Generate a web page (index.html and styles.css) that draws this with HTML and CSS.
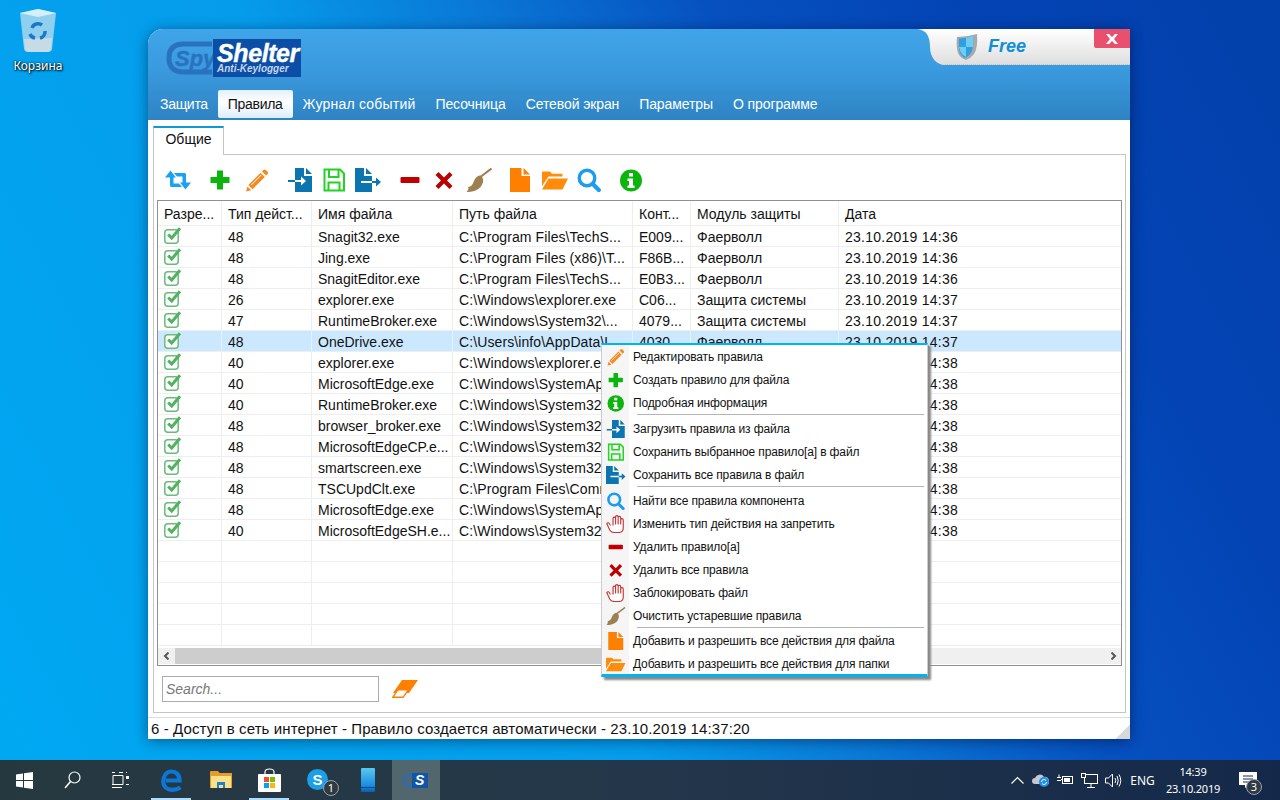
FILE: index.html
```html
<!DOCTYPE html>
<html lang="ru">
<head>
<meta charset="utf-8">
<title>SpyShelter</title>
<link rel="stylesheet" href="styles.css">
</head>
<body>
<svg class="defs" xmlns="http://www.w3.org/2000/svg">
  <symbol id="i-retweet" viewBox="0 0 26 24"><g transform="translate(0 2.5)" fill="#1ba1f2"><path d="M5.5 0L11 7H8.5V13H14L17 16.5H6.5Q5 16.5 5 15V7H0z"/><path d="M20.5 19L15 12H17.5V6H12L9 2.5H19.5Q21 2.5 21 4V12H26z"/></g></symbol>
  <symbol id="i-plus" viewBox="0 0 26 24"><path fill="#0cb50c" d="M10 2.5h6v6.5h6.5v6H16v6.5h-6V15H3.5V9H10z"/></symbol>
  <symbol id="i-pencil" viewBox="0 0 26 24"><g fill="#f58a1f"><path d="M8.6 21.2L4.4 17 16.6 4.8l4.2 4.2z"/><path d="M3.4 18.4l3.8 3.8-5.2 1.2z"/><path d="M18 3.4l1.4-1.4q1.2-1.2 2.4 0l1.8 1.8q1.2 1.2 0 2.4l-1.4 1.4z"/></g><path d="M7.2 17L17.4 6.8" stroke="#fff" stroke-width="1"/></symbol>
  <symbol id="i-import" viewBox="0 0 26 24"><g fill="#0b75b0"><path d="M8 0h9v8h8v16H8z"/><path d="M19 0l6 6h-6z"/><rect x="1" y="12" width="7" height="2"/></g><path fill="#fff" d="M8 12h6V8.5l5 4.5-5 4.5V14H8z"/></symbol>
  <symbol id="i-save" viewBox="0 0 26 24"><g fill="none" stroke="#22d422" stroke-width="2"><path d="M3.5 1.5h15.5l4 4v17H3.5z"/><path d="M8 1.5v7.500h9.500v-7.500"/><path d="M7.500 22.500v-8h11v8"/></g></symbol>
  <symbol id="i-export" viewBox="0 0 26 24"><g fill="#0b75b0"><path d="M0 0h9v8h8v16H0z"/><path d="M11 0l6 6h-6z"/><path d="M17 13h4V9.500l5 4.500-5 4.500V15h-4z"/></g><rect x="6" y="13" width="11" height="2" fill="#fff"/></symbol>
  <symbol id="i-minus" viewBox="0 0 26 24"><rect x="3.500" y="9" width="19" height="6" rx="1" fill="#c00000"/></symbol>
  <symbol id="i-times" viewBox="0 0 26 24"><path fill="#bb0000" d="M4.500 7L7.500 4l5.500 5.500L18.500 4l3 3-5.500 5.500 5.500 5.500-3 3-5.500-5.500L7.500 21l-3-3 5.500-5.500z"/></symbol>
  <symbol id="i-broom" viewBox="0 0 26 24"><path d="M25.500 .5L15 8.500" stroke="#9e7f50" stroke-width="2" fill="none"/><path fill="#9e7f50" d="M14.500 7.500C18 10 18 14 15 18.500 11.500 23 5 24 .5 24 2.500 22 3 20.500 2 19 5 19 7 16 8 13 9 10 11.500 7.500 14.500 7.500z"/></symbol>
  <symbol id="i-file" viewBox="0 0 26 24"><g fill="#ff7f00"><path d="M3 0h11.500v8H23v16H3z"/><path d="M16.500 0l6.500 6.500h-6.500z"/></g></symbol>
  <symbol id="i-folder" viewBox="0 0 26 24"><g fill="#ff8c0a" transform="translate(0 2.500)"><path d="M0 16V2Q0 1 1 1H8l2 2.200h9.500q1 0 1 1V6H6.500L1 14z"/><path d="M6.500 8H26L20.500 19H0z"/></g></symbol>
  <symbol id="i-search" viewBox="0 0 26 24"><g fill="none" stroke="#1a9cf0"><circle cx="11" cy="10" r="7.800" stroke-width="3.400"/><path d="M16.800 16l6 6" stroke-width="4.200" stroke-linecap="round"/></g></symbol>
  <symbol id="i-info" viewBox="0 0 26 24"><circle cx="13" cy="12.500" r="11" fill="#0bb50b"/><rect x="11" y="5" width="4" height="3.500" fill="#fff"/><path fill="#fff" d="M9.500 10.500H15v7h1.500V20h-7v-2.500H11v-4.500H9.500z"/></symbol>
  <symbol id="i-hand" viewBox="0 0 26 24"><path fill="#fff" stroke="#c83232" stroke-width="1.500" stroke-linejoin="round" d="M6 14L4 11a1.500 1.500 0 0 0-2.400 1.800L5 20q2 3.300 6 3.300h6q6 0 6-6V6.500a1.700 1.700 0 0 0-3.400 0V12V3.500a1.700 1.700 0 0 0-3.400 0V12V2.500a1.700 1.700 0 0 0-3.400 0V12V4.500a1.700 1.700 0 0 0-3.400 0V14"/></symbol>
  <symbol id="i-check" viewBox="0 0 18 17"><rect x=".8" y="2.800" width="13.400" height="13.400" rx="3" fill="#fff" stroke="#6abb7c" stroke-width="1.500"/><path d="M4.200 7.500l3.500 3.500 8.300-9.700" fill="none" stroke="#4fb35f" stroke-width="3"/></symbol>
</svg>

<main class="desktop">
  <div class="bin">
    <svg class="bin-icon" width="40" height="44" viewBox="0 0 40 44"><path d="M2 4L20 0l18 4-4 36q-.5 3-4 3H10q-3.500 0-4-3z" fill="#a8d8ee" opacity=".85"/><path d="M2 4L20 8l18-4-18-4z" fill="#d5effa"/><path d="M6 30l28-1-1 11q-.5 3-4 3H11q-3.500 0-4-3z" fill="#c7dbe6"/><g fill="none" stroke="#1f75c8" stroke-width="3.500"><path d="M14 19a6.500 6.500 0 0 1 10-3"/><path d="M27 22a6.500 6.500 0 0 1-5 7"/><path d="M17 29a6.500 6.500 0 0 1-5-4"/></g></svg>
    <span class="bin-label">Корзина</span>
  </div>

  <section class="window">
    <header class="win-head">
      <div class="logo">
        <svg width="136" height="38" viewBox="0 0 136 38">
          <path d="M46 5H18Q3 5 3 19t15 14H46" fill="none" stroke="#2a72c0" stroke-width="5"/>
          <text class="logo-spy" x="9" y="27">Spy</text>
          <rect x="47" y="0" width="88" height="38" fill="#0c4ea6"/>
          <text class="logo-sh" x="51" y="23">Shelter</text>
          <text class="logo-ak" x="51" y="33">Anti-Keylogger</text>
        </svg>
      </div>
      <nav class="nav">
        <a class="nav-item tight">Защита</a>
        <a class="nav-item tight active">Правила</a>
        <a class="nav-item wide">Журнал событий</a>
        <a class="nav-item">Песочница</a>
        <a class="nav-item">Сетевой экран</a>
        <a class="nav-item">Параметры</a>
        <a class="nav-item">О программе</a>
      </nav>
      <div class="free">
        <svg class="free-bg" width="215" height="36" viewBox="0 0 215 36"><defs><linearGradient id="fg" x1="0" y1="0" x2="0" y2="1"><stop offset="0" stop-color="#fff"/><stop offset="1" stop-color="#dedede"/></linearGradient></defs><path d="M0 0C12 0 15 8 15 18 15 29 22 36 30 36H215V0z" fill="url(#fg)"/><path d="M30 35.500H215" stroke="#c4c4c4" stroke-dasharray="1 1"/></svg>
        <svg class="shield" width="22" height="26" viewBox="0 0 22 26"><path d="M1 3Q11 3 21 0q1 14-3 20-3 4-8 6Q4 24 2 19 0 13 1 3z" fill="#a9a9a9"/><path d="M3 4.500Q10 4.500 17 2q1 12-2 17-2 3-6 5-4-2-5.500-6Q2.500 13 3 4.500z" fill="#2f9fe0"/><path d="M10 4v9h7q.500-4 0-11zM3 13h7v10q-4-2-5.500-5z" fill="#6ecdf5"/></svg>
        <span class="free-text">Free</span>
      </div>
      <button class="close" type="button"><svg width="14" height="10" viewBox="0 0 14 10"><path d="M1 0h3l3 3 3-3h3L9 5l4 5h-3L7 7l-3 3H1l4-5z" fill="#fff"/></svg></button>
    </header>

    <div class="win-main">
      <div class="tabs"><span class="tab">Общие</span></div>
      <div class="pane">
        <div class="toolbar">
          <svg class="tool g41"><use href="#i-retweet"/></svg>
          <svg class="tool g37"><use href="#i-plus"/></svg>
          <svg class="tool g43"><use href="#i-pencil"/></svg>
          <svg class="tool g33"><use href="#i-import"/></svg>
          <svg class="tool g34"><use href="#i-save"/></svg>
          <svg class="tool g41"><use href="#i-export"/></svg>
          <svg class="tool g34"><use href="#i-minus"/></svg>
          <svg class="tool g34"><use href="#i-times"/></svg>
          <svg class="tool g41"><use href="#i-broom"/></svg>
          <svg class="tool g34"><use href="#i-file"/></svg>
          <svg class="tool g34"><use href="#i-folder"/></svg>
          <svg class="tool g41"><use href="#i-search"/></svg>
          <svg class="tool"><use href="#i-info"/></svg>
        </div>

        <div class="grid-wrap">
          <table class="grid">
            <colgroup><col class="c1"><col class="c2"><col class="c3"><col class="c4"><col class="c5"><col class="c6"><col></colgroup>
            <thead><tr><th>Разре...</th><th>Тип дейст...</th><th>Имя файла</th><th>Путь файла</th><th>Конт...</th><th>Модуль защиты</th><th>Дата</th></tr></thead>
            <tbody>
              <tr><td><svg class="chk"><use href="#i-check"/></svg></td><td>48</td><td>Snagit32.exe</td><td>C:\Program Files\TechS...</td><td>E009...</td><td>Фаерволл</td><td>23.10.2019 14:36</td></tr>
              <tr><td><svg class="chk"><use href="#i-check"/></svg></td><td>48</td><td>Jing.exe</td><td>C:\Program Files (x86)\T...</td><td>F86B...</td><td>Фаерволл</td><td>23.10.2019 14:36</td></tr>
              <tr><td><svg class="chk"><use href="#i-check"/></svg></td><td>48</td><td>SnagitEditor.exe</td><td>C:\Program Files\TechS...</td><td>E0B3...</td><td>Фаерволл</td><td>23.10.2019 14:36</td></tr>
              <tr><td><svg class="chk"><use href="#i-check"/></svg></td><td>26</td><td>explorer.exe</td><td>C:\Windows\explorer.exe</td><td>C06...</td><td>Защита системы</td><td>23.10.2019 14:37</td></tr>
              <tr><td><svg class="chk"><use href="#i-check"/></svg></td><td>47</td><td>RuntimeBroker.exe</td><td>C:\Windows\System32\...</td><td>4079...</td><td>Защита системы</td><td>23.10.2019 14:37</td></tr>
              <tr class="sel"><td><svg class="chk"><use href="#i-check"/></svg></td><td>48</td><td>OneDrive.exe</td><td>C:\Users\info\AppData\L...</td><td>4030...</td><td>Фаерволл</td><td>23.10.2019 14:37</td></tr>
              <tr><td><svg class="chk"><use href="#i-check"/></svg></td><td>40</td><td>explorer.exe</td><td>C:\Windows\explorer.exe</td><td>C06...</td><td>Фаерволл</td><td>23.10.2019 14:38</td></tr>
              <tr><td><svg class="chk"><use href="#i-check"/></svg></td><td>40</td><td>MicrosoftEdge.exe</td><td>C:\Windows\SystemApps...</td><td>E1F0...</td><td>Фаерволл</td><td>23.10.2019 14:38</td></tr>
              <tr><td><svg class="chk"><use href="#i-check"/></svg></td><td>40</td><td>RuntimeBroker.exe</td><td>C:\Windows\System32\...</td><td>4079...</td><td>Фаерволл</td><td>23.10.2019 14:38</td></tr>
              <tr><td><svg class="chk"><use href="#i-check"/></svg></td><td>48</td><td>browser_broker.exe</td><td>C:\Windows\System32\...</td><td>A2C1...</td><td>Фаерволл</td><td>23.10.2019 14:38</td></tr>
              <tr><td><svg class="chk"><use href="#i-check"/></svg></td><td>48</td><td>MicrosoftEdgeCP.e...</td><td>C:\Windows\System32\...</td><td>B7D2...</td><td>Фаерволл</td><td>23.10.2019 14:38</td></tr>
              <tr><td><svg class="chk"><use href="#i-check"/></svg></td><td>48</td><td>smartscreen.exe</td><td>C:\Windows\System32\...</td><td>D4E8...</td><td>Фаерволл</td><td>23.10.2019 14:38</td></tr>
              <tr><td><svg class="chk"><use href="#i-check"/></svg></td><td>48</td><td>TSCUpdClt.exe</td><td>C:\Program Files\Comm...</td><td>9A3F...</td><td>Фаерволл</td><td>23.10.2019 14:38</td></tr>
              <tr><td><svg class="chk"><use href="#i-check"/></svg></td><td>48</td><td>MicrosoftEdge.exe</td><td>C:\Windows\SystemApps...</td><td>E1F0...</td><td>Фаерволл</td><td>23.10.2019 14:38</td></tr>
              <tr><td><svg class="chk"><use href="#i-check"/></svg></td><td>40</td><td>MicrosoftEdgeSH.e...</td><td>C:\Windows\System32\...</td><td>C3B6...</td><td>Фаерволл</td><td>23.10.2019 14:38</td></tr>
              <tr><td></td><td></td><td></td><td></td><td></td><td></td><td></td></tr>
              <tr><td></td><td></td><td></td><td></td><td></td><td></td><td></td></tr>
              <tr><td></td><td></td><td></td><td></td><td></td><td></td><td></td></tr>
              <tr><td></td><td></td><td></td><td></td><td></td><td></td><td></td></tr>
              <tr><td></td><td></td><td></td><td></td><td></td><td></td><td></td></tr>
            </tbody>
          </table>
          <div class="hscroll">
            <span class="arrow"><svg width="8" height="8" viewBox="0 0 8 8"><path d="M5.500 .5L2 4l3.500 3.500" fill="none" stroke="#555" stroke-width="2"/></svg></span>
            <span class="thumb"></span>
            <span class="arrow"><svg width="8" height="8" viewBox="0 0 8 8"><path d="M2.500 .5L6 4 2.500 7.500" fill="none" stroke="#555" stroke-width="2"/></svg></span>
          </div>
        </div>

        <div class="search-row">
          <div class="search">Search...</div>
          <svg class="eraser" width="26" height="18" viewBox="0 0 26 18"><path d="M10 0H26L17 13H1z" fill="#ff8000"/><path d="M.7 17.300L6 9.700h10.500l-5.500 7.600z" fill="#fff" stroke="#ff8000" stroke-width="1.400"/></svg>
        </div>
      </div>
    </div>

    <footer class="status">6 - Доступ в сеть интернет - Правило создается автоматически - 23.10.2019 14:37:20</footer>
    <span class="grip"></span>
  </section>

  <div class="menu">
    <div class="mi"><svg class="mic"><use href="#i-pencil"/></svg><span>Редактировать правила</span></div>
    <div class="mi"><svg class="mic"><use href="#i-plus"/></svg><span>Создать правило для файла</span></div>
    <div class="mi"><svg class="mic"><use href="#i-info"/></svg><span>Подробная информация</span></div>
    <div class="msep"></div>
    <div class="mi"><svg class="mic"><use href="#i-import"/></svg><span>Загрузить правила из файла</span></div>
    <div class="mi"><svg class="mic"><use href="#i-save"/></svg><span>Сохранить выбранное правило[а] в файл</span></div>
    <div class="mi"><svg class="mic"><use href="#i-export"/></svg><span>Сохранить все правила в файл</span></div>
    <div class="msep"></div>
    <div class="mi"><svg class="mic"><use href="#i-search"/></svg><span>Найти все правила компонента</span></div>
    <div class="mi"><svg class="mic"><use href="#i-hand"/></svg><span>Изменить тип действия на запретить</span></div>
    <div class="mi"><svg class="mic"><use href="#i-minus"/></svg><span>Удалить правило[а]</span></div>
    <div class="mi"><svg class="mic"><use href="#i-times"/></svg><span>Удалить все правила</span></div>
    <div class="mi"><svg class="mic"><use href="#i-hand"/></svg><span>Заблокировать файл</span></div>
    <div class="mi"><svg class="mic"><use href="#i-broom"/></svg><span>Очистить устаревшие правила</span></div>
    <div class="msep thin"></div>
    <div class="mi"><svg class="mic"><use href="#i-file"/></svg><span>Добавить и разрешить все действия для файла</span></div>
    <div class="mi"><svg class="mic"><use href="#i-folder"/></svg><span>Добавить и разрешить все действия для папки</span></div>
  </div>
</main>

<footer class="taskbar">
  <div class="tb-btn"><svg width="17" height="17" viewBox="0 0 17 17"><path fill="#fff" d="M0 2.400L7 1.400V8H0zM8 1.300L17 0V8H8zM0 9h7v6.600l-7-1zM8 9h9v8l-9-1.300z"/></svg></div>
  <div class="tb-btn"><svg width="17" height="18" viewBox="0 0 17 18"><circle cx="10.500" cy="6.500" r="5.500" fill="none" stroke="#fff" stroke-width="1.200"/><path d="M6.500 10.500L1 17" stroke="#fff" stroke-width="1.500"/></svg></div>
  <div class="tb-btn tb-gap"><svg width="17" height="16" viewBox="0 0 17 16"><g fill="none" stroke="#fff"><path d="M0 .5h3M0 15.500h10M0 12.500h11V3.500H1v9M7 .5h4"/></g><rect x="14" y="4" width="3" height="3" fill="#fff"/><rect x="14" y="12" width="3" height="1" fill="#fff"/><rect x="14" y="0" width="1" height="1" fill="#fff"/></svg></div>
  <div class="app on"><svg width="21" height="23" viewBox="0 0 21 23"><path fill="none" stroke="#0a78d8" stroke-width="4.200" d="M5 11.500H18.500C18.500 5.500 15 2.500 10.500 2.500 5 2.500 2.300 7.500 2.300 12.500 2.300 18.500 7 20.800 11 20.800 14 20.800 17 20 19.500 18.500"/></svg></div>
  <div class="app"><svg width="22" height="18" viewBox="0 0 22 18"><path fill="#e89b2a" d="M0 1q0-1 1-1h7l1.500 2H22v15H0z"/><path fill="#fbe08a" d="M1 5h20v12H1z"/><path fill="#1c7fd0" d="M7 11h8v6h-2v-3H9v3H7z"/></svg></div>
  <div class="app on"><svg width="23" height="24" viewBox="0 0 23 24"><path fill="none" stroke="#fff" stroke-width="1.200" d="M7 7V4q0-3 4.500-3T16 4v3"/><rect y="6" width="23" height="18" rx="1" fill="#fff"/><rect x="6" y="9" width="5" height="5" fill="#f25022"/><rect x="12" y="9" width="5" height="5" fill="#7fba00"/><rect x="6" y="15" width="5" height="5" fill="#00a4ef"/><rect x="12" y="15" width="5" height="5" fill="#ffb900"/></svg></div>
  <div class="app app-sky"><span class="sky">S</span><span class="badge sky-badge">1</span></div>
  <div class="app"><svg width="14" height="24" viewBox="0 0 14 24"><defs><linearGradient id="ph" x1="0" y1="0" x2="0" y2="1"><stop offset="0" stop-color="#5ac8f0"/><stop offset=".7" stop-color="#1f8fe0"/><stop offset="1" stop-color="#0a5fb0"/></linearGradient></defs><rect width="14" height="24" rx="1" fill="url(#ph)"/><rect y="19" width="14" height="1" fill="#0a4a90"/></svg></div>
  <div class="app active"><svg width="26" height="15" viewBox="0 0 26 15"><path d="M9 2H6Q1 2 1 7.500T6 13H9" fill="none" stroke="#1f6fc4" stroke-width="2"/><rect x="9" width="16" height="15" fill="#1254a8"/><text class="tb-s" x="12" y="12">S</text></svg></div>

  <div class="tray">
    <div class="t-ic"><svg width="13" height="8" viewBox="0 0 13 8"><path d="M.5 7.500l6-6 6 6" fill="none" stroke="#fff" stroke-width="1.200"/></svg></div>
    <div class="t-ic"><svg width="18" height="14" viewBox="0 0 18 14"><path d="M3 11a3 3 0 0 1 0-6 5 5 0 0 1 9-1 4 4 0 0 1 5 4v3z" fill="#c5c9cf"/><circle cx="12" cy="9" r="5" fill="#1f8fe8"/><path d="M9.500 9a2.500 2.500 0 0 1 4.500-1.500M14.500 9a2.500 2.500 0 0 1-4.500 1.500" fill="none" stroke="#fff"/></svg></div>
    <div class="t-ic"><svg width="16" height="12" viewBox="0 0 16 12"><g fill="none" stroke="#fff"><rect x="5.500" y="2.500" width="10" height="7"/><path d="M0 3.500h4M0 6.500h4M2 3.500v-3M5 5.500H4"/></g><rect x="7" y="4" width="6" height="4" fill="#fff"/></svg></div>
    <div class="t-ic"><svg width="17" height="15" viewBox="0 0 17 15"><g fill="none" stroke="#fff"><rect x="3.500" y="1.500" width="13" height="9"/><rect x=".5" y=".5" width="4" height="4" fill="#1a2e46"/><path d="M10 10.500v4M6 14.500h8"/></g></svg></div>
    <div class="t-ic"><svg width="17" height="15" viewBox="0 0 17 15"><g fill="none" stroke="#fff"><path d="M.5 5h3L7.500 1v13l-4-4h-3z"/><path d="M10 5q1.500 2.500 0 5M12 3q2.500 4.500 0 9M14 1.500q3.500 6 0 12"/></g></svg></div>
    <div class="t-eng">ENG</div>
    <div class="t-clock"><span>14:39</span><span>23.10.2019</span></div>
    <div class="t-note"><svg width="18" height="16" viewBox="0 0 18 16"><path fill="#fff" d="M0 0h18v13h-8l-4 3v-3H0z"/><path d="M4 4h10M4 7h10M4 10h7" stroke="#1a2e46"/></svg><span class="badge note-badge">3</span></div>
    <div class="t-end"></div>
  </div>
</footer>
</body>
</html>
```
FILE: styles.css
```css
* { box-sizing: border-box; }
html, body { margin: 0; height: 100%; }
body {
  width: 1280px; height: 800px; overflow: hidden;
  display: flex; flex-direction: column;
  font-family: "Liberation Sans", "Noto Sans", sans-serif;
  font-size: 14px; color: #111;
}
.defs { display: none; }
.desktop {
  flex: 1; position: relative;
  background: linear-gradient(62deg, #00a8f2 0%, #059ceb 38%, #0a78d6 52%, #0650c0 66%, #0343b4 82%, #0240aa 100%);
}

/* desktop icon */
.bin { position: absolute; left: 8px; top: 9px; width: 60px; display: flex; flex-direction: column; align-items: center; }
.bin-icon { display: block; }
.bin-label { font-family: "Noto Sans", sans-serif; color: #fff; font-size: 12px; line-height: 16px; margin-top: 5px; text-shadow: 0 0 2px #000, 1px 1px 2px #000; }

/* window */
.window {
  position: absolute; left: 148px; top: 29px; width: 982px; height: 710px;
  display: flex; flex-direction: column; background: #fff;
  border-top-left-radius: 15px;
  box-shadow: 0 2px 14px rgba(0,0,30,.45);
}
.win-head {
  position: relative; height: 91px; flex: none;
  background: linear-gradient(180deg, #3fa5e8 0%, #3a9ade 45%, #2e83c3 100%);
  border-top-left-radius: 15px;
  display: flex; flex-direction: column;
}
.logo { height: 61px; padding: 10px 0 0 18px; }
.logo svg { display: block; }
.logo-spy { font: italic 700 22px "Liberation Sans", sans-serif; fill: #2a72c0; stroke: #2a72c0; stroke-width: .4px; }
.logo-sh { font: italic 700 25px "Liberation Sans", sans-serif; fill: #fff; stroke: #fff; stroke-width: .4px; letter-spacing: -.4px; }
.logo-ak { font: italic 700 10px "Liberation Sans", sans-serif; fill: #c4d6ee; }
.nav { display: flex; padding-left: 2px; height: 28px; }
.nav-item { padding: 0 10px; line-height: 28px; color: #fff; font-size: 14px; white-space: nowrap; letter-spacing: -.1px; }
.nav-item.tight { letter-spacing: -.3px; }
.nav-item.wide { letter-spacing: .2px; }
.nav-item.active {
  color: #111; border-radius: 2px;
  background: linear-gradient(180deg, #e2f0fb 0%, #fff 45%, #dcedfb 100%);
}
.free { position: absolute; right: 0; top: 0; width: 215px; height: 36px; display: flex; align-items: center; padding-left: 41px; }
.free-bg { position: absolute; left: 0; top: 0; }
.shield { position: relative; margin-right: 10px; }
.free-text { position: relative; font: italic 700 18px "Liberation Sans", sans-serif; color: #0f8fd8; margin-top: -2px; }
.close {
  position: absolute; right: 0; top: 0; width: 36px; height: 19px; padding: 0; border: 0;
  background: #e8506e; border-bottom-left-radius: 2px;
  display: flex; align-items: center; justify-content: center;
}
.win-main { flex: 1; min-height: 0; display: flex; flex-direction: column; padding: 6px 4px 4px 5px; }
.tabs { height: 29px; display: flex; position: relative; z-index: 1; flex: none; }
.tab {
  width: 71px; height: 29px; border: 1px solid #c4c4c4; border-top: 2px solid #0e9ad6; border-bottom: 0;
  background: #fff; text-align: center; line-height: 23px; font-size: 14px;
}
.pane { flex: 1; min-height: 0; margin-top: -1px; border: 1px solid #c4c4c4; padding: 0 3px; display: flex; flex-direction: column; }
.toolbar { flex: none; display: flex; padding: 13px 0 8px 8px; }
.tool { width: 26px; height: 24px; margin-right: 8.5px; flex: none; }
.g41 { margin-right: 15.5px; }
.g37 { margin-right: 11.5px; }
.g43 { margin-right: 17px; }
.g33 { margin-right: 7.5px; }
.g34 { margin-right: 8.5px; }

.grid-wrap { flex: none; height: 466px; border: 1px solid #8d9095; display: flex; flex-direction: column; }
.grid { width: 100%; table-layout: fixed; border-collapse: separate; border-spacing: 0; flex: none; }
.c1 { width: 64px; } .c2 { width: 90px; } .c3 { width: 141px; } .c4 { width: 180px; } .c5 { width: 58px; } .c6 { width: 148px; }
.grid th, .grid td { padding: 2px 0 0 6px; font-weight: 400; text-align: left; white-space: nowrap; overflow: hidden; border-right: 1px solid #eee; border-bottom: 1px solid #eee; font-size: 14px; }
.grid th { height: 25px; }
.grid td { height: 21px; line-height: 18px; }
.grid td:nth-child(4) { letter-spacing: .1px; }
.grid td:last-child { letter-spacing: .25px; }
.grid th:last-child, .grid td:last-child { border-right: 0; }
.sel td { background: #cce8ff; border-right-color: #e4f2ff; }
.chk { width: 18px; height: 17px; display: block; margin-top: -3px; }
.hscroll { margin-top: 2px; height: 16px; display: flex; background: #f0f0f0; }
.arrow { width: 17px; flex: none; display: flex; align-items: center; justify-content: center; }
.thumb { width: 475px; background: #cdcdcd; }
.hscroll .arrow:last-child { margin-left: auto; }

.search-row { flex: none; display: flex; align-items: center; gap: 13px; padding: 10px 0 0 5px; }
.search { width: 217px; height: 26px; border: 1px solid #ababab; font: italic 14px/24px "Liberation Sans", sans-serif; color: #777; padding-left: 3px; }
.status { flex: none; height: 22px; border-top: 1px solid #ddd; padding-left: 3px; line-height: 22px; font-size: 15px; letter-spacing: .1px; white-space: nowrap; }
.grip { position: absolute; right: 0; bottom: 0; width: 15px; height: 15px; background: linear-gradient(135deg, transparent 50%, #d8d8d8 50%); }

/* context menu */
.menu {
  position: absolute; left: 601px; top: 343px; width: 327px; height: 334px;
  border-top: 2px solid #00b4f0; border-bottom: 3px solid #00b4f0; border-left: 1px solid #ccc; border-right: 1px solid #ccc;
  background: linear-gradient(90deg, #f5f5f5 27px, #fff 27px);
  box-shadow: 3px 3px 2px #888;
  font-size: 12px; letter-spacing: -.14px;
}
.mi { height: 23px; display: flex; align-items: center; white-space: nowrap; }
.mic { width: 19.5px; height: 18px; margin: 0 7.5px 0 4px; flex: none; }
.msep { height: 3px; margin: 0 3px 0 35px; border-top: 1px solid #b5b5b5; }
.msep.thin { height: 2px; }

/* taskbar */
.taskbar {
  flex: none; height: 40px; display: flex; color: #fff;
  font-family: "Noto Sans", sans-serif;
  background: linear-gradient(90deg, #26383f 0%, #25384a 45%, #14284a 100%);
}
.tb-btn { width: 48px; display: flex; align-items: center; justify-content: center; }
.tb-gap { margin-right: 3px; }
.app { width: 49px; display: flex; align-items: center; justify-content: center; position: relative; }
.app.on::after { content: ""; position: absolute; left: 4px; right: 5px; bottom: 0; height: 2px; background: #a9dcff; }
.app.active { width: 48px; background: #52666e; }
.sky { width: 21px; height: 21px; border-radius: 50%; background: #1a9fe8; color: #fff; font: 700 15px/21px "Liberation Sans", sans-serif; text-align: center; margin: -2px 2px 0 0; }
.badge { position: absolute; width: 16px; height: 16px; border-radius: 50%; background: #2f3a42; border: 1px solid #9aa5ab; color: #fff; font-size: 11px; line-height: 14px; text-align: center; }
.sky-badge { left: 29px; top: 20px; }
.tb-s { font: italic 700 14px "Liberation Sans", sans-serif; fill: #fff; }
.tray { margin-left: auto; display: flex; align-items: stretch; }
.t-ic { width: 24px; display: flex; align-items: center; justify-content: center; }
.t-eng { width: 35px; font-size: 12px; display: flex; align-items: center; justify-content: center; }
.t-clock { width: 66px; font-size: 11px; letter-spacing: -.2px; line-height: 17px; display: flex; flex-direction: column; align-items: center; justify-content: center; }
.t-note { width: 44px; position: relative; display: flex; align-items: center; justify-content: center; }
.note-badge { left: 20px; top: 19px; }
.t-end { width: 10px; }
```
